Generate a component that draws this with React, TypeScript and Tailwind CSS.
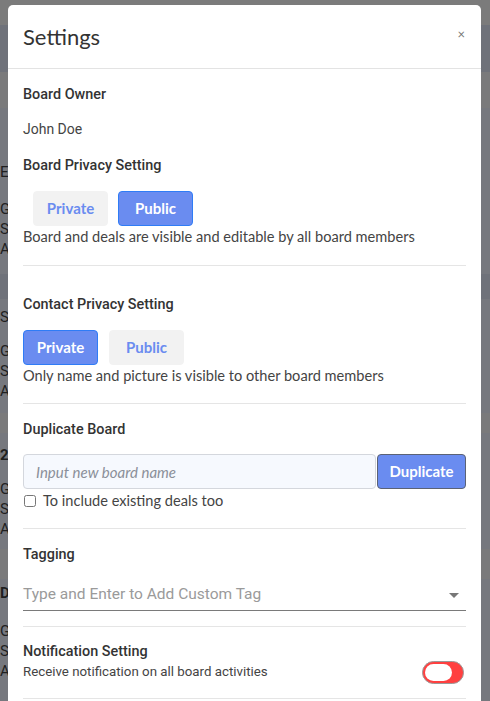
import { useState } from 'react';

const sans = { fontFamily: 'Lato, "Liberation Sans", sans-serif' };

function Divider({ className = '' }: { className?: string }) {
  return <div className={`h-px bg-[#e5e5e5] ${className}`} />;
}

function Label({ children, className = '' }: { children: React.ReactNode; className?: string }) {
  return (
    <div className={`font-['Roboto',sans-serif] text-[14.4px] leading-5 font-medium text-[#333] ${className}`}>
      {children}
    </div>
  );
}

function PrivacyToggle({
  value,
  onChange,
  indent,
}: {
  value: 'private' | 'public';
  onChange: (v: 'private' | 'public') => void;
  indent?: boolean;
}) {
  const btn = (active: boolean) =>
    active
      ? 'bg-[#6a8cf0] text-white border-[#2f7cf6]'
      : 'bg-[#f2f2f2] text-[#6a8cf0] border-[#f2f2f2]';
  return (
    <div className={`flex ${indent ? 'pl-[10px] gap-[10px]' : 'gap-[11px]'}`}>
      <button
        onClick={() => onChange('private')}
        className={`w-[75px] h-[35px] rounded-[4px] border text-[15px] font-bold ${btn(value === 'private')}`}
        style={sans}
      >
        Private
      </button>
      <button
        onClick={() => onChange('public')}
        className={`w-[75px] h-[35px] rounded-[4px] border text-[15px] font-bold ${btn(value === 'public')}`}
        style={sans}
      >
        Public
      </button>
    </div>
  );
}

export default function App() {
  const [boardPrivacy, setBoardPrivacy] = useState<'private' | 'public'>('public');
  const [contactPrivacy, setContactPrivacy] = useState<'private' | 'public'>('private');
  const [notify, setNotify] = useState(false);

  return (
    <div className="relative w-[490px] h-[701px] overflow-hidden bg-[#76787e]">
      {/* backdrop: page behind the overlay */}
      <div className="flex flex-col font-['Roboto',sans-serif] text-[15px] text-[#1f1f1f]">
        <div className="h-[25px] bg-[#7b7b7b]" />
        <div className="h-[47px] bg-[#6f727a]" />
        <div className="h-[36px] bg-[#7a7a7b]" />
        <div className="h-[52px]" />
        <div className="pt-[2px] leading-5">En</div>
        <div className="mt-[17px] leading-5">Go</div>
        <div className="leading-5">Sh</div>
        <div className="leading-5">Av</div>
        <div className="h-[25px] mt-[15px] bg-[#6f727a]" />
        <div className="mt-[8px] leading-5">Se</div>
        <div className="mt-[14px] leading-5">Go</div>
        <div className="leading-5">Sh</div>
        <div className="leading-5">Av</div>
        <div className="h-[20px] mt-[12px] bg-[#7a7a7b]" />
        <div className="mt-[12px] leading-5 font-bold">2</div>
        <div className="mt-[14px] leading-5">Go</div>
        <div className="leading-5">Sh</div>
        <div className="leading-5">Av</div>
        <div className="h-[30px] mt-[10px] bg-[#7a7a7b]" />
        <div className="mt-[4px] leading-5 font-bold">Di</div>
        <div className="mt-[18px] leading-5">Go</div>
        <div className="leading-5">Sh</div>
        <div className="leading-5">Av</div>
      </div>

      {/* modal */}
      <div className="absolute left-[8px] top-[5px] w-[473px] bg-white rounded-t-[5px]">
        <div className="h-[64px] px-[15px] flex items-center justify-between border-b border-[#e3e3e3]">
          <h1 className="text-[22px] text-[#333]" style={sans}>
            Settings
          </h1>
          <button className="text-[13px] leading-none text-[#777] mr-[1px] mb-[4px]" style={sans}>
            ×
          </button>
        </div>

        <div className="px-[15px] pt-[16px]">
          <Label>Board Owner</Label>
          <div className="mt-[14px] font-['Roboto',sans-serif] text-[14px] leading-5 text-[#444]">John Doe</div>

          <Label className="mt-[17px]">Board Privacy Setting</Label>
          <div className="mt-[15px]">
            <PrivacyToggle value={boardPrivacy} onChange={setBoardPrivacy} indent />
          </div>
          <p className="text-[14.6px] leading-[22px] text-[#444]" style={sans}>
            Board and deals are visible and editable by all board members
          </p>
          <Divider className="mt-[17px]" />

          <Label className="mt-[29px]">Contact Privacy Setting</Label>
          <div className="mt-[15px]">
            <PrivacyToggle value={contactPrivacy} onChange={setContactPrivacy} />
          </div>
          <p className="text-[14.6px] leading-[22px] text-[#444]" style={sans}>
            Only name and picture is visible to other board members
          </p>
          <Divider className="mt-[16px]" />

          <Label className="mt-[16px]">Duplicate Board</Label>
          <div className="mt-[14px] flex gap-px">
            <input
              placeholder="Input new board name"
              className="flex-1 h-[35px] rounded-[4px] border border-[#d4d7dd] bg-[#f6f9fe] px-[12px] text-[15px] italic text-[#444] placeholder:text-[#8a8f99] outline-none"
              style={sans}
            />
            <button
              className="w-[89px] h-[35px] rounded-[4px] border border-[#5b6275] bg-[#6a8cf0] text-white text-[15px] font-bold"
              style={sans}
            >
              Duplicate
            </button>
          </div>
          <label className="flex items-center gap-[7px] h-[24px] text-[14.6px] text-[#444]" style={sans}>
            <input type="checkbox" className="w-[12px] h-[12px] ml-[1px]" />
            To include existing deals too
          </label>
          <Divider className="mt-[15px]" />

          <Label className="mt-[16px]">Tagging</Label>
          <div className="mt-[14px] h-[32px] flex items-center justify-between border-b border-[#7a7a7a]">
            <span className="font-['Roboto',sans-serif] text-[15.5px] text-[#9a9a9a]">
              Type and Enter to Add Custom Tag
            </span>
            <svg width="10" height="5" viewBox="0 0 10 5" className="mr-[7px] mt-[2px]">
              <path d="M0 0 L10 0 L5 5 Z" fill="#777" />
            </svg>
          </div>
          <Divider className="mt-[15px]" />

          <Label className="mt-[15px]">Notification Setting</Label>
          <div className="flex items-start justify-between">
            <span className="font-['Roboto',sans-serif] text-[13.3px] leading-5 text-[#444]">
              Receive notification on all board activities
            </span>
            <button
              onClick={() => setNotify(!notify)}
              className={`w-[42px] h-[23px] rounded-full border border-[#9a9a9a] p-[2px] flex mr-[2px] -mt-[1px] ${
                notify ? 'bg-[#4caf50] justify-end' : 'bg-[#ff4040] justify-start'
              }`}
            >
              <span className="w-[27px] h-[17px] rounded-full bg-white" />
            </button>
          </div>
          <Divider className="mt-[14px]" />
          <div className="h-[40px]" />
        </div>
      </div>
    </div>
  );
}
